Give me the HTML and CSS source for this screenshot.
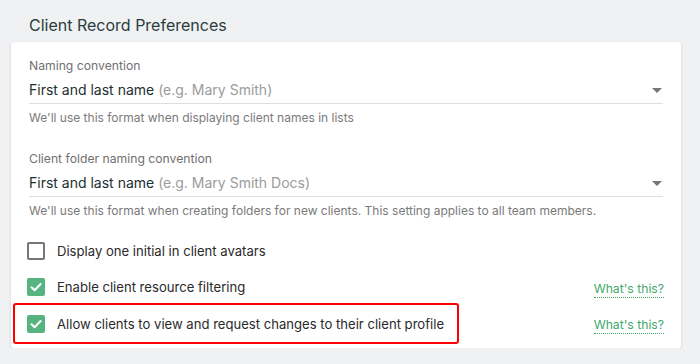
FILE: index.html
```html
<!DOCTYPE html>
<html>
<head>
<meta charset="utf-8">
<link rel="stylesheet" href="styles.css">
</head>
<body>
<div class="page">
  <h1 class="title">Client Record Preferences</h1>
  <div class="card">
    <div class="field first">
      <div class="field-label">Naming convention</div>
      <div class="select">
        <span class="value">First and last name <span class="hint">(e.g. Mary Smith)</span></span>
        <span class="arrow"></span>
      </div>
      <div class="helper">We'll use this format when displaying client names in lists</div>
    </div>
    <div class="field">
      <div class="field-label">Client folder naming convention</div>
      <div class="select">
        <span class="value">First and last name <span class="hint">(e.g. Mary Smith Docs)</span></span>
        <span class="arrow"></span>
      </div>
      <div class="helper">We'll use this format when creating folders for new clients. This setting applies to all team members.</div>
    </div>
    <div class="checks">
      <div class="row">
        <label class="check"><span class="box"></span><span>Display one initial in client avatars</span></label>
      </div>
      <div class="row">
        <label class="check"><span class="box on"><svg viewBox="0 0 18 18" width="18" height="18"><path d="M4.5 9.2 L7.6 12.2 L13.6 6" fill="none" stroke="#fff" stroke-width="2" stroke-linecap="round" stroke-linejoin="round"/></svg></span><span>Enable client resource filtering</span></label>
        <a class="whats">What's this?</a>
      </div>
      <div class="row last">
        <label class="check highlight"><span class="box on"><svg viewBox="0 0 18 18" width="18" height="18"><path d="M4.5 9.2 L7.6 12.2 L13.6 6" fill="none" stroke="#fff" stroke-width="2" stroke-linecap="round" stroke-linejoin="round"/></svg></span><span>Allow clients to view and request changes to their client profile</span></label>
        <a class="whats">What's this?</a>
      </div>
    </div>
  </div>
</div>
</body>
</html>
```

FILE: styles.css
```css
html, body {
  margin: 0;
  padding: 0;
  background: #f0f1f3;
  font-family: Inter, "Noto Sans", sans-serif;
}
.page {
  padding: 0 19px 0 11px;
}
.title {
  margin: 0;
  padding: 15px 0 0 18px;
  height: 27px;
  line-height: 20px;
  font-size: 16px;
  font-weight: 400;
  color: #2b3d3d;
}
.card {
  background: #fff;
  border-radius: 3px;
  box-shadow: 0 1px 3px rgba(0,0,0,0.14);
  padding: 0 18px 4px 18px;
}
.field { padding-top: 25px; }
.field.first { padding-top: 16px; }
.field-label {
  font-size: 12.2px;
  line-height: 16px;
  color: #707070;
}
.select {
  margin-top: 5px;
  display: flex;
  align-items: center;
  justify-content: space-between;
  border-bottom: 1px solid #dedede;
  padding-bottom: 2px;
}
.value {
  font-size: 14px;
  line-height: 22px;
  color: #1c2f2f;
}
.hint { color: #9b9b9b; }
.arrow {
  width: 0;
  height: 0;
  border-left: 5px solid transparent;
  border-right: 5px solid transparent;
  border-top: 5px solid #777;
  margin-right: 1px;
}
.helper {
  margin-top: 6px;
  font-size: 12px;
  line-height: 16px;
  color: #7a7a7a;
}
.checks { padding-top: 14px; }
.row {
  display: flex;
  align-items: center;
  justify-content: space-between;
  height: 36px;
}
.row.last { height: 41px; margin-top: -2px; }
.check {
  display: flex;
  align-items: center;
  gap: 12px;
  font-size: 13.1px;
  color: #2a2a2a;
  margin-left: -2px;
  white-space: nowrap;
}
.box {
  box-sizing: border-box;
  width: 18px;
  height: 18px;
  border: 2px solid #767676;
  border-radius: 2px;
  display: flex;
  flex: none;
}
.box.on {
  border: none;
  background: #55b47f;
}
.highlight {
  align-self: stretch;
  box-sizing: border-box;
  margin-left: -16px;
  padding: 0 12px 0 12px;
  border: 2px solid #f00;
  border-radius: 3px;
  width: 446px;
}
.whats {
  font-size: 12.2px;
  line-height: 16px;
  color: #3fa86b;
  border-bottom: 1px dotted #3fa86b;
  margin-top: 4px;
  margin-right: -1px;
}
```
